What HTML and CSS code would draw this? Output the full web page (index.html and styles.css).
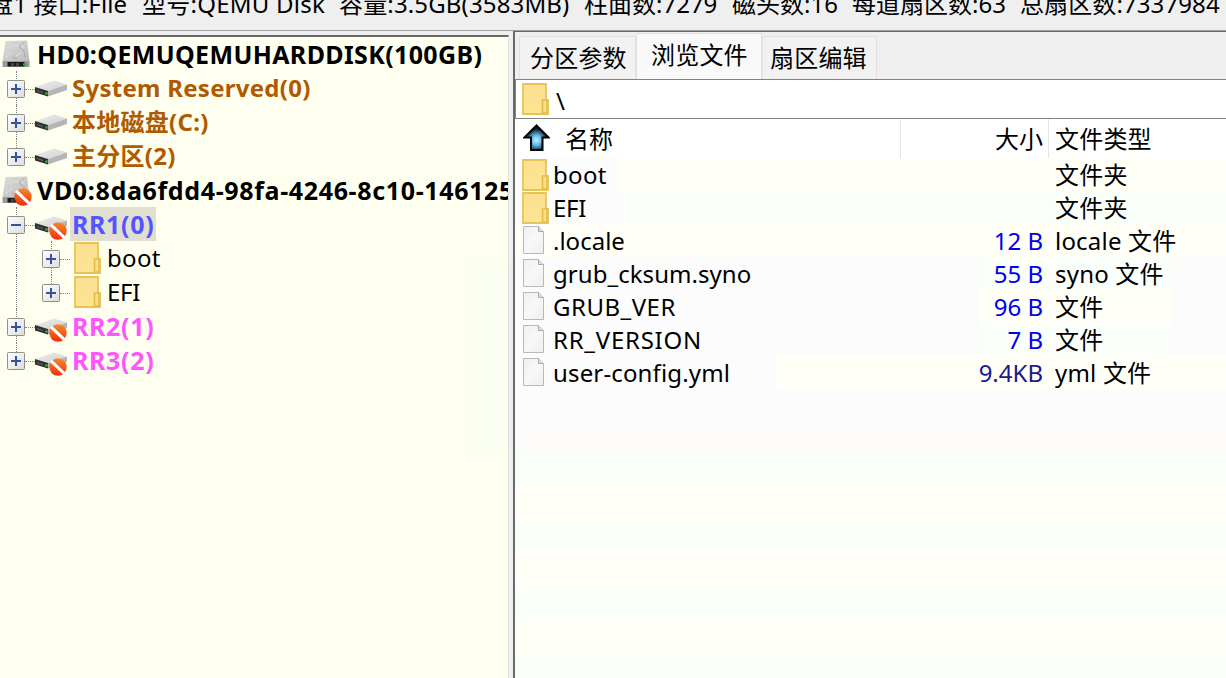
FILE: index.html
```
<!DOCTYPE html>
<html lang="zh-CN">
<head>
    <meta charset="UTF-8">
    <title>分区浏览</title>
    <link rel="stylesheet" href="styles.css">
</head>
<body>
    <!-- shared icons -->
    <svg class="defs" width="0" height="0">
        <defs>
            <linearGradient id="gBox" x1="0" y1="0" x2="1" y2="1">
                <stop offset="0" stop-color="#fff"/>
                <stop offset="1" stop-color="#dcdcdc"/>
            </linearGradient>
            <linearGradient id="gMetal" x1="0" y1="0" x2="1" y2="1">
                <stop offset="0" stop-color="#dcdcdc"/>
                <stop offset="1" stop-color="#bcbcbc"/>
            </linearGradient>
            <linearGradient id="gTop" x1="0" y1="0" x2="1" y2="1">
                <stop offset="0" stop-color="#eee"/>
                <stop offset="1" stop-color="#d0d0d2"/>
            </linearGradient>
            <linearGradient id="gBan" x1="0" y1="0" x2="0" y2="1">
                <stop offset="0" stop-color="#f58a2c"/>
                <stop offset="1" stop-color="#f02d0a"/>
            </linearGradient>
            <linearGradient id="gFolder" x1="0" y1="0" x2="0" y2="1">
                <stop offset="0" stop-color="#fddf92"/>
                <stop offset="1" stop-color="#fbe593"/>
            </linearGradient>
            <linearGradient id="gPage" x1="0" y1="0" x2="1" y2="1">
                <stop offset="0" stop-color="#f0f0f0"/>
                <stop offset=".5" stop-color="#f8f8f8"/>
                <stop offset="1" stop-color="#eee"/>
            </linearGradient>
            <radialGradient id="gArrow" cx=".5" cy=".6" r=".5">
                <stop offset="0" stop-color="#c4f2ff"/>
                <stop offset=".4" stop-color="#62bdea"/>
                <stop offset=".9" stop-color="#0a2233"/>
            </radialGradient>
        </defs>
        <symbol id="plus" viewBox="0 0 18 18">
            <rect x=".5" y=".5" width="17" height="17" rx="1" fill="url(#gBox)" stroke="#8e8e8e"/>
            <path d="M4 9h10M9 4v10" stroke="#3552a0" stroke-width="2"/>
        </symbol>
        <symbol id="minus" viewBox="0 0 18 18">
            <rect x=".5" y=".5" width="17" height="17" rx="1" fill="url(#gBox)" stroke="#8e8e8e"/>
            <path d="M4 9h10" stroke="#3552a0" stroke-width="2"/>
        </symbol>
        <symbol id="ban" viewBox="0 0 18 18">
            <circle cx="9" cy="9" r="8.700" fill="url(#gBan)"/>
            <path d="M2 2.800l13.600 13" stroke="#fff" stroke-width="3"/>
        </symbol>
        <symbol id="disk" viewBox="0 0 28 28">
            <path d="M3.500 1L25 .5l2.500 20.500H.5z" fill="url(#gMetal)"/>
            <path d="M4 17c3-1 3-4 6-4M8 8c3-2 7-4 9-1M14 16l5-3M19 3l2 5" stroke="#e2e2e2" fill="none"/>
            <path d="M22 2l-5 5 5 4 1 6M10 17l5 2" stroke="#adadad" fill="none"/>
            <path d="M.5 21h27v6H.5z" fill="#9a9a9a"/>
            <path d="M5.500 22h17v4.500h-17z" fill="#1a1a1a"/>
            <path d="M9 23h3v3H9zM14 23h3v3h-3z" fill="#444"/>
            <path d="M21 23.500h4v2h-4z" fill="#2bb52b"/>
        </symbol>
        <symbol id="drive" viewBox="0 0 32 18">
            <path d="M0 7L19 .5 32 4.500 13 11z" fill="url(#gTop)"/>
            <path d="M13 11l19-6.500V10l-19 6.500z" fill="#b5b5b7"/>
            <path d="M0 7l13 4v5.500L0 12.500z" fill="#303232"/>
            <path d="M2 10.500l6 2" stroke="#686868"/>
            <path d="M10.500 12.500h2v2h-2z" fill="#35d83a"/>
        </symbol>
        <symbol id="folder" viewBox="0 0 27 32">
            <path d="M1 1h23v16h2v14H1z" fill="url(#gFolder)" stroke="#e8c456" stroke-width="1.800"/>
            <path d="M20.500 30V17H25v13z" fill="#fadf88" stroke="#e3bd48" stroke-width="1.600"/>
        </symbol>
        <symbol id="page" viewBox="0 0 21 28">
            <path d="M.5.5h15l5 5v22H.5z" fill="url(#gPage)" stroke="#b9b9b9"/>
            <path d="M15.500.5v5h5" fill="#ddd" stroke="#a9a9a9"/>
        </symbol>
        <symbol id="up" viewBox="0 0 27 27">
            <path d="M13.500 1.500L25.500 13.500H19.500V26H8V13.500H1.500z" fill="url(#gArrow)" stroke="#000" stroke-width="2"/>
        </symbol>
    </svg>

    <div class="status">
        <span class="s1">盘1 接口:File</span>
        <span class="s2">型号:QEMU Disk</span>
        <span class="s3">容量:3.5GB(3583MB)</span>
        <span class="s4">柱面数:7279</span>
        <span class="s5">磁头数:16</span>
        <span class="s6">每道扇区数:63</span>
        <span class="s7">总扇区数:7337984</span>
    </div>

    <div class="main">
        <div class="tree">
            <div class="node root"><svg class="ic-disk"><use href="#disk"/></svg><b class="t-hd">HD0:QEMUQEMUHARDDISK(100GB)</b></div>
            <div class="node part"><svg class="ic-box"><use href="#plus"/></svg><i class="dots"></i><svg class="ic-drive"><use href="#drive"/></svg><b class="brown">System Reserved(0)</b></div>
            <div class="node part"><svg class="ic-box"><use href="#plus"/></svg><i class="dots"></i><svg class="ic-drive"><use href="#drive"/></svg><b class="brown">本地磁盘(C:)</b></div>
            <div class="node part last"><svg class="ic-box"><use href="#plus"/></svg><i class="dots"></i><svg class="ic-drive"><use href="#drive"/></svg><b class="brown">主分区(2)</b></div>
            <div class="node root"><svg class="ic-disk"><use href="#disk"/></svg><svg class="ic-ban"><use href="#ban"/></svg><b class="t-vd">VD0:8da6fdd4-98fa-4246-8c10-146125</b></div>
            <div class="node part"><svg class="ic-box"><use href="#minus"/></svg><i class="dots"></i><svg class="ic-drive"><use href="#drive"/></svg><svg class="ic-ban"><use href="#ban"/></svg><b class="blue t-rr selected">RR1(0)</b></div>
            <div class="node dir"><svg class="ic-box"><use href="#plus"/></svg><i class="dots"></i><svg class="ic-folder"><use href="#folder"/></svg><span class="t-boot">boot</span></div>
            <div class="node dir last"><svg class="ic-box"><use href="#plus"/></svg><i class="dots"></i><svg class="ic-folder"><use href="#folder"/></svg><span class="t-efi">EFI</span></div>
            <div class="node part"><svg class="ic-box"><use href="#plus"/></svg><i class="dots"></i><svg class="ic-drive"><use href="#drive"/></svg><svg class="ic-ban"><use href="#ban"/></svg><b class="pink t-rr">RR2(1)</b></div>
            <div class="node part last"><svg class="ic-box"><use href="#plus"/></svg><i class="dots"></i><svg class="ic-drive"><use href="#drive"/></svg><svg class="ic-ban"><use href="#ban"/></svg><b class="pink t-rr">RR3(2)</b></div>
        </div>

        <div class="browser">
            <div class="tabs">
                <div class="tab tab1">分区参数</div>
                <div class="tab active">浏览文件</div>
                <div class="tab tab3">扇区编辑</div>
            </div>
            <div class="path"><svg class="ic-folder"><use href="#folder"/></svg><span>\</span></div>
            <div class="row head">
                <div class="name"><svg class="ic-up"><use href="#up"/></svg>名称</div>
                <div class="size">大小</div>
                <div class="type">文件类型</div>
            </div>
            <div class="files">
                <div class="row cream">
                    <div class="name"><svg class="ic-folder"><use href="#folder"/></svg><span class="t-boot">boot</span></div>
                    <div class="size"></div>
                    <div class="type">文件夹</div>
                </div>
                <div class="row mint">
                    <div class="name"><svg class="ic-folder"><use href="#folder"/></svg><span class="t-efi">EFI</span></div>
                    <div class="size"></div>
                    <div class="type">文件夹</div>
                </div>
                <div class="row cream2">
                    <div class="name"><svg class="ic-page"><use href="#page"/></svg><span>.locale</span></div>
                    <div class="size">12 B</div>
                    <div class="type">locale 文件</div>
                </div>
                <div class="row part-mint">
                    <div class="name"><svg class="ic-page"><use href="#page"/></svg><span class="t-grub">grub_cksum.syno</span></div>
                    <div class="size">55 B</div>
                    <div class="type">syno 文件</div>
                </div>
                <div class="row part-cream">
                    <div class="name"><svg class="ic-page"><use href="#page"/></svg><span class="t-gver">GRUB_VER</span></div>
                    <div class="size">96 B</div>
                    <div class="type">文件</div>
                </div>
                <div class="row part-mint">
                    <div class="name"><svg class="ic-page"><use href="#page"/></svg><span class="t-rver">RR_VERSION</span></div>
                    <div class="size">7 B</div>
                    <div class="type">文件</div>
                </div>
                <div class="row half">
                    <div class="name"><svg class="ic-page"><use href="#page"/></svg><span class="t-user">user-config.yml</span></div>
                    <div class="size kb">9.4KB</div>
                    <div class="type">yml 文件</div>
                </div>
            </div>
        </div>
    </div>
</body>
</html>
```

FILE: styles.css
```
* {
    box-sizing: border-box;
}
body {
    margin: 0;
    width: 1226px;
    height: 678px;
    overflow: hidden;
    display: flex;
    flex-direction: column;
    background: #efefef;
    color: #000;
    font-family: "Noto Sans", "Noto Sans CJK SC", sans-serif;
    font-size: 24px;
    line-height: 34px;
    white-space: nowrap;
}
svg {
    flex: none;
    display: block;
}
.defs {
    position: absolute;
}

/* disk info line */
.status {
    flex: none;
    display: flex;
    height: 31px;
    overflow: hidden;
    border-bottom: 1px solid #a0a0a0;
}
.status span {
    flex: none;
    margin-top: -13px;
    height: 34px;
}
.s1 { width: 153px; margin-left: -11px; letter-spacing: .15px; }
.s2 { width: 197px; letter-spacing: .25px; }
.s3 { width: 245px; letter-spacing: .15px; }
.s4 { width: 148px; }
.s5 { width: 120px; }
.s6 { width: 168px; }
.s7 { letter-spacing: .1px; }

.main {
    flex: 1;
    display: flex;
    min-height: 0;
}

/* left tree */
.tree {
    flex: none;
    width: 509px;
    margin-top: 4px;
    border-top: 2px solid #696969;
    border-right: 1px solid #e3e3e3;
    background: linear-gradient(#fafff2, #fafff2) 470px 225px / 38px 190px no-repeat #fffff0;
    overflow: hidden;
}
.node {
    position: relative;
    display: flex;
    align-items: center;
    height: 34px;
}
.root {
    padding-left: 2px;
}
.root b {
    margin-left: 7px;
}
.part {
    padding-left: 7px;
}
.dir {
    padding-left: 42px;
}
.part::before,
.dir::before {
    content: "";
    position: absolute;
    left: 16px;
    top: 0;
    height: 34px;
    border-left: 1px dotted #808080;
}
/* vertical line of the RR group runs on beside its folders */
.dir::after {
    content: "";
    position: absolute;
    left: 16px;
    top: 0;
    height: 34px;
    border-left: 1px dotted #808080;
}
.dir::before {
    left: 51px;
}
.part.last::before,
.dir.last::before {
    height: 17px;
}
.dots {
    width: 10px;
    margin-top: 2px;
    border-top: 1px dotted #808080;
}
.ic-box {
    position: relative;
    width: 18px;
    height: 18px;
    margin-top: 2px;
}
.ic-disk {
    width: 28px;
    height: 28px;
}
.ic-drive {
    width: 32px;
    height: 18px;
    margin-top: 2px;
}
.ic-ban {
    position: absolute;
    width: 18px;
    height: 18px;
    left: 49px;
    top: 15px;
}
.root .ic-ban {
    left: 14px;
}
.ic-folder {
    width: 27px;
    height: 32px;
}
.part b {
    margin-left: 3px;
    padding: 0 2px;
    letter-spacing: .27px;
}
.t-hd { font-size: 25px; letter-spacing: .37px; }
.t-vd { font-size: 25px; letter-spacing: .65px; }
.part .t-rr { font-size: 25px; letter-spacing: .65px; }
.t-boot { letter-spacing: .3px; }
.t-efi { letter-spacing: -.3px; }
.t-grub { letter-spacing: .05px; }
.t-gver { letter-spacing: .5px; }
.t-rver { letter-spacing: .75px; }
.t-user { letter-spacing: .15px; }
.dir .ic-folder {
    margin-left: 4px;
}
.dir span {
    margin-left: 6px;
}
.brown { color: #b05a00; }
.blue { color: #5555ff; }
.pink { color: #ff55ff; }
.selected {
    background: #e0dfd0;
}

/* right side */
.browser {
    flex: 1;
    margin-left: 4px;
    display: flex;
    flex-direction: column;
    border-left: 2px solid #696969;
    border-top: 1px solid #696969;
    min-width: 0;
}
.tabs {
    flex: none;
    display: flex;
    align-items: flex-end;
    height: 47px;
    padding-left: 4px;
}
.tab {
    height: 43px;
    padding-top: 4px;
    background: #f2f2f2;
    border: 1px solid #e2e2e2;
    border-bottom: none;
    letter-spacing: .2px;
}
.tab1 { width: 117px; padding-left: 10px; }
.tab3 { width: 115px; padding-left: 7px; }
.tab.active {
    width: 126px;
    height: 46px;
    padding-left: 14px;
    padding-top: 4px;
    background: #f9f9f9;
}
.path {
    flex: none;
    display: flex;
    align-items: center;
    height: 40px;
    padding-left: 6px;
    border: 1px solid #828282;
    border-right: none;
    background: #fff;
}
.path span {
    margin-left: 7px;
    padding-top: 3px;
}
.row {
    display: flex;
    height: 33px;
    line-height: 33px;
}
.name {
    width: 386px;
    display: flex;
    align-items: center;
    padding-left: 7px;
}
.size {
    width: 148px;
    padding-right: 6px;
    text-align: right;
    color: #0000f0;
}
.kb { color: #1a1a90; }
.type {
    padding-left: 6px;
    letter-spacing: .2px;
}
.head {
    flex: none;
    height: 39px;
    line-height: 40px;
    background: #fff;
}
.head .name,
.head .size {
    border-right: 1px solid #e5e5e5;
}
.head .size {
    color: #000;
    padding-right: 5px;
}
.ic-up {
    width: 27px;
    height: 27px;
    margin-left: 1px;
    margin-right: 15px;
    margin-top: -2px;
}
.name span {
    margin-left: 4px;
}
.ic-page {
    width: 21px;
    height: 28px;
    margin-left: 1px;
    margin-right: 5px;
    margin-top: -2px;
}
/* empty list area keeps the alternating stripes */
.files {
    flex: 1;
    background: linear-gradient(#fcfcfc 264px, #fefcfa 264px 294px, #fafffa 294px 329px, #fffff8 329px 363px, #fafffa 363px 396px, #fffff8 396px 429px, #fafffa 429px 462px, #fffff8 462px 495px, #fafffa 495px);
}
.cream { background: linear-gradient(90deg, #fcfcfc 103px, #fffff8 103px); }
.mint { background: linear-gradient(90deg, #fcfcfc 103px, #fafffa 103px); }
.cream2 { background: #fffff8; }
.part-mint { background: linear-gradient(90deg, #fcfcfc 464px, #fafffa 464px 656px, #fcfcfc 656px); }
.part-cream { background: linear-gradient(90deg, #fcfcfc 464px, #fffff8 464px 656px, #fcfcfc 656px); }
.half { background: linear-gradient(90deg, #fcfcfc 261px, #fffff8 261px); }
```
